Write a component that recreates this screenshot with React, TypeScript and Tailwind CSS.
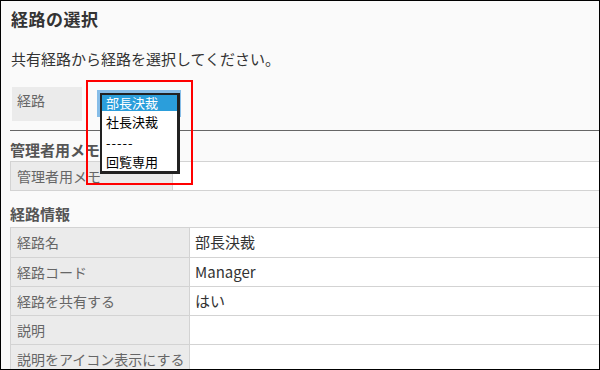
import React from "react";

const rows: { label: string; value: string; h: string }[] = [
  { label: "経路名", value: "部長決裁", h: "h-[30px]" },
  { label: "経路コード", value: "Manager", h: "h-[29px]" },
  { label: "経路を共有する", value: "はい", h: "h-[29px]" },
  { label: "説明", value: "", h: "h-[29px]" },
  { label: "説明をアイコン表示にする", value: "", h: "h-[29px]" },
];

export default function App() {
  return (
    <div
      className="relative w-[600px] h-[370px] overflow-hidden border border-black bg-[#fafafa]"
      style={{ fontFamily: '"Noto Sans CJK JP", "Noto Sans", sans-serif' }}
    >
      <div className="pl-[9px]">
        <div className="h-[36px] pl-px leading-[36px] text-[17px] font-bold tracking-[0.5px] text-[#333]">経路の選択</div>
        <div className="h-[44px] pl-px leading-[44px] text-[15px] text-[#333]">
          共有経路から経路を選択してください。
        </div>
        <div className="mt-[6px] flex h-[34px] items-start">
          <div className="ml-[2px] h-[34px] w-[70px] bg-[#ebebeb] pl-[5px] pt-[3px] text-[14px] leading-[20px] text-[#666]">
            経路
          </div>
          <div className="ml-[15px] mt-[3px] h-[27px] w-[84px] bg-[#86bde8]" />
        </div>
        <div className="mt-[9px] h-px bg-[#666]" />
        <div className="h-[30px] pt-[9px] text-[15px] font-bold leading-[20px] text-[#555]">管理者用メモ</div>
        <div className="flex h-[30px] border-y border-[#d3d3d3]">
          <div className="flex w-[163px] items-center border-x border-[#d3d3d3] bg-[#ebebeb] pl-[6px] text-[14px] text-[#666]">
            管理者用メモ
          </div>
          <div className="flex-1 bg-white" />
        </div>
        <div className="h-[36px] pt-[13px] text-[15px] font-bold leading-[20px] text-[#555]">経路情報</div>
        <div className="border-t border-[#d3d3d3]">
          {rows.map((r) => (
            <div key={r.label} className={`flex ${r.h} border-b border-[#d3d3d3]`}>
              <div className="flex w-[180px] items-center border-x border-[#d3d3d3] bg-[#ebebeb] pl-[6px] text-[14px] text-[#666]">
                {r.label}
              </div>
              <div className="flex flex-1 items-center bg-white pl-[5px] text-[15px] text-[#333]">{r.value}</div>
            </div>
          ))}
        </div>
      </div>

      {/* dropdown list */}
      <div className="absolute left-[99px] top-[92px] h-[81px] w-[80px] border-l-2 border-t-2 border-r-[3px] border-b-[3px] border-[#222] bg-white text-[13px] text-black">
        <div className="h-[16px] bg-[#2b9edb] pl-[4px] leading-[16px] text-white">部長決裁</div>
        <div className="h-[22px] pl-[4px] leading-[22px]">社長決裁</div>
        <div className="h-[20px] pl-[4px] leading-[20px] tracking-[1px]">-----</div>
        <div className="h-[18px] pl-[4px] leading-[18px]">回覧専用</div>
      </div>

      {/* red highlight */}
      <div className="absolute left-[85px] top-[79px] h-[105px] w-[107px] border-2 border-[#ff0000]" />
    </div>
  );
}
